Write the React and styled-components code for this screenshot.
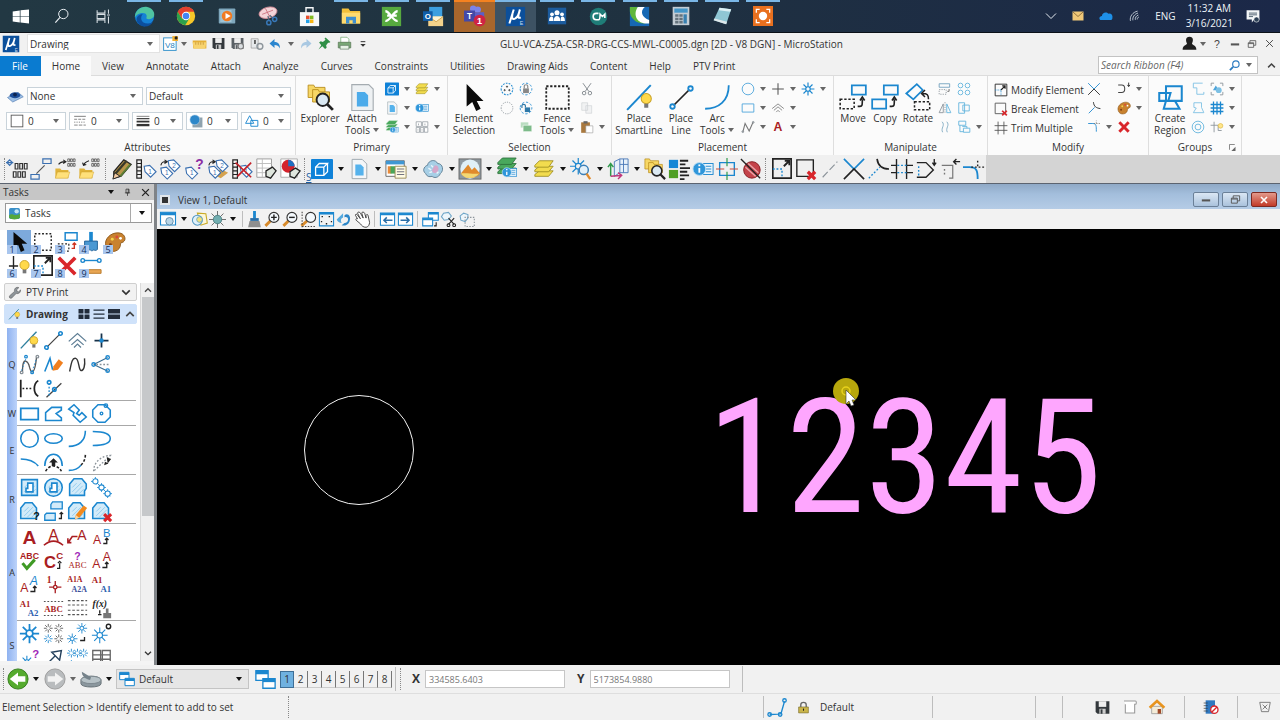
import React from "react";
import styled, { createGlobalStyle, css } from "styled-components";

const BLUE = "#1b87cf";
const INK = "#222";
const GREY = "#8a9299";
const RED = "#a91d22";

const GlobalStyle = createGlobalStyle`
  * { box-sizing: border-box; }
  body { margin: 0; background: #f0f0f0; }
  body, button, input, select {
    font-family: "Open Sans", "Noto Sans", sans-serif;
    font-size: 10px;
    line-height: 12px;
    color: #333;
  }
  button { padding: 0; border: 0; background: none; }
  h1, h2 { margin: 0; font-size: 10px; font-weight: 400; }
`;

/* ---------- icon drawings, all on a 24 x 24 grid ---------- */

const P = ({ d, c = BLUE, w = 1.5, f = "none", ...rest }) => (
  <path d={d} stroke={c} strokeWidth={w} fill={f} {...rest} />
);
const S = ({ d, f = INK, ...rest }) => <path d={d} fill={f} {...rest} />;
const C = ({ x, y, r = 2, c = BLUE, w = 1.5, f = "none" }) => (
  <circle cx={x} cy={y} r={r} stroke={c} strokeWidth={w} fill={f} />
);
const T = ({ x, y, s = 10, f = RED, children, ...rest }) => (
  <text x={x} y={y} fontSize={s} fill={f} textAnchor="middle" fontFamily="Liberation Sans, sans-serif" {...rest}>
    {children}
  </text>
);
const Serif = (props) => <T fontFamily="Liberation Serif, serif" fontWeight="700" {...props} />;

const Bulb = ({ x = 15, y = 13 }) => (
  <g transform={`translate(${x} ${y})`}>
    <circle r="5" fill="#ffd94a" stroke="#c9a227" />
    <path d="M-2 5h4v4h-4z" fill="#777" />
  </g>
);
const Cross = ({ x = 16, y = 16, r = 4, w = 3 }) => (
  <path d={`M${x - r} ${y - r}l${2 * r} ${2 * r}M${x + r} ${y - r}l${-2 * r} ${2 * r}`} stroke="#d9262b" strokeWidth={w} fill="none" />
);
/* eight rays round a small open centre */
const Spark = ({ x = 12, y = 12, r = 8, c = BLUE, w = 1.5 }) => {
  const k = r * 0.7;
  const i = r * 0.35;
  const j = i * 0.7;
  return (
    <g stroke={c} strokeWidth={w} fill="none">
      <path
        d={`M${x} ${y - r}V${y - i}M${x} ${y + i}V${y + r}M${x - r} ${y}H${x - i}M${x + i} ${y}H${x + r}M${x - k} ${y - k}L${x - j} ${y - j}M${x + j} ${y + j}L${x + k} ${y + k}M${x + k} ${y - k}L${x + j} ${y - j}M${x - j} ${y + j}L${x - k} ${y + k}`}
      />
      {r > 5 && <circle cx={x} cy={y} r={i} />}
    </g>
  );
};
const Lens = ({ x = 14, y = 9, handle = "#d88a2a" }) => (
  <g>
    <path d={`M${x - 4} ${y + 4}L2 21`} stroke={handle} strokeWidth="4" />
    <circle cx={x} cy={y} r="7" fill="#f4f9fd" stroke="#333" strokeWidth="1.6" />
  </g>
);
const Layers = ({ c = "#f2dc4e", s = "#9a8b1d", y = 0 }) => (
  <g transform={`translate(0 ${y})`} fill={c} stroke={s} strokeWidth=".9">
    <path d="M2 18l5-4h15l-5 6H2z" />
    <path d="M2 13l5-4h15l-5 6H2z" />
    <path d="M2 8l5-5h15l-5 7H2z" />
  </g>
);
const InfoCard = () => (
  <g>
    <rect x="9" y="6" width="14" height="12" fill="#eaf5fc" stroke={BLUE} />
    <path d="M15 9h6M15 12h6M15 15h6" stroke={BLUE} />
    <circle cx="8" cy="12" r="7" fill="#2f96da" stroke="#bfe0f5" />
    <path d="M8 11v5M8 7v2" stroke="#fff" strokeWidth="2" />
  </g>
);
const Folder = ({ x = 0, y = 0, k = 1 }) => (
  <g transform={`translate(${x} ${y}) scale(${k})`}>
    <path d="M2 6h7l2 2h10v12H2z" fill="#e0b33a" />
    <path d="M5 11h18l-3 9H2z" fill="#ffe07a" stroke="#c99a22" strokeWidth=".6" />
  </g>
);
const Card = ({ x, y }) => (
  <path transform={`translate(${x} ${y})`} d="M0 2V0h5l1 2h9v9H0z" fill="#f7d765" stroke="#b98d1b" strokeWidth=".8" />
);
const Sheet = () => (
  <g transform="translate(4 1)">
    <path d="M.5.5h11l5 5v16H.5z" fill="#f4f6f8" stroke="#9aa5ad" />
    <path d="M4 6h6l3 3v9H4z" fill="#55b2ec" />
  </g>
);
const Palette = () => (
  <g>
    <path d="M2 16C0 9 7 2 15 2c8 0 9 7 7 9-1 2-4 1-4 3 0 4-2 7-6 8-5 1-9-1-10-6z" fill="#c9822f" stroke="#8c5618" />
    <circle cx="9" cy="9" r="1.600" fill="#f3d34b" />
    <circle cx="14" cy="6.500" r="1.600" fill="#d94a3a" />
    <circle cx="18" cy="8" r="1.500" fill="#fff" />
    <circle cx="7" cy="15" r="1.600" fill="#7a3c12" />
  </g>
);
const Tag = ({ x = 10, y = 10, n = "1", c = "#3a6fb0" }) => (
  <g transform={`translate(${x} ${y})`}>
    <path d="M0 1l6-1 7 7-6 6-6-6z" fill="#fff" stroke={c} strokeWidth="1.200" />
    <T x="6.500" y="9" s="7" f={c}>{n}</T>
  </g>
);
const Hatch = ({ d }) => (
  <g>
    <path d={d} fill="#d3ebf9" stroke={BLUE} strokeWidth="1.800" />
    <path d="M6 12l5-5M6 17L16 7M9 19l9-9M14 19l5-5" stroke="#8cc8ec" strokeWidth="1" />
  </g>
);
const Floppy = ({ c = "#33383c" }) => (
  <g>
    <path d="M1 2h22v20H4l-3-3z" fill={c} />
    <path d="M6 2h12v9H6z" fill="#eee" />
    <path d="M7 14h10v8H7z" fill="#ccc" />
    <path d="M9 15h3v7H9z" fill={c} />
  </g>
);
const Dots = ({ d, c = INK, w = 1.5, dash = "2 2" }) => <path d={d} stroke={c} strokeWidth={w} strokeDasharray={dash} fill="none" />;
const Pencil = ({ c = "#f28a1e" }) => (
  <g>
    <path d="M10 16L19 5l4 3-9 11-5 2z" fill={c} />
    <path d="M9 21l1-5 4 3z" fill="#f7d7a8" />
  </g>
);
const Bubbles = () => (
  <path d="M15 1h2v3h-2zM18 1h2v3h-2zM21 1h2v3h-2zM15 6h2v3h-2zM18 6h2v3h-2zM21 6h2v3h-2z" fill="none" stroke="#444" strokeWidth=".8" />
);

const art = {
  windows: <S f="#fff" d="M1 5l10-1.500V11.500H1zM12 3.300L24 2v9.500H12zM1 12.500h10v8L1 19zM12 12.500h12V22l-12-1.500z" />,
  search: <g><C x={14} y={9} r={7} c="#e8eef2" /><P c="#e8eef2" w={1.800} d="M9 14l-7 8" /></g>,
  taskView: <P c="#d7dfe4" d="M3 3v4h11V3M3 21v-4h11v4M3 9h11v6H3zM19 2v6M19 12v10M17 10h4" />,
  edge: <g><circle cx="12" cy="12" r="11" fill="#1581d5" /><path d="M1 13C1 4 9 0 15 1c6 1 9 6 8 10-1 4-7 5-9 3 1-2 1-6-4-6-5 0-8 3-9 5z" fill="#4fc3a1" /><path d="M10 9c-3 3-3 11 6 11 3 0 5-2 6-3-3 7-11 8-16 4-5-4-4-11 4-12z" fill="#0c4f9e" /></g>,
  chrome: <g><circle cx="12" cy="12" r="11" fill="#f6c729" /><path d="M12 1C8 1 4 3 2 7l5 8 5-8h10c-2-4-6-6-10-6z" fill="#e2402f" /><path d="M2 7c-3 7 1 15 9 16l5-8-9 0z" fill="#2da14c" /><circle cx="12" cy="12" r="5" fill="#fff" /><circle cx="12" cy="12" r="4" fill="#4285f4" /></g>,
  media: <g><rect x="1" y="2" width="22" height="20" rx="1" fill="#7fa8bd" /><rect x="3" y="4" width="15" height="16" fill="#9fc3d4" /><circle cx="12" cy="12" r="7" fill="#f07b22" /><path d="M10 8l7 4-7 4z" fill="#fff" /></g>,
  snip: <g><ellipse cx="12" cy="8" rx="11" ry="6.500" fill="#f3d4d8" stroke="#d78f9a" transform="rotate(-15 12 8)" /><path d="M5 10L18 5M9 3l5 10" stroke="#c96b7a" /><path d="M12 12l1 5M14 11l4 4" stroke="#567" strokeWidth="1.500" /><circle cx="13" cy="20" r="2.500" fill="none" stroke="#3878b8" strokeWidth="1.800" /><circle cx="20" cy="16" r="2.500" fill="none" stroke="#3878b8" strokeWidth="1.800" /></g>,
  store: <g><path d="M1 7h22v16H1z" fill="#f6f8f9" /><path d="M8 8V2h8v6" fill="none" stroke="#f6f8f9" strokeWidth="1.600" /><path d="M8 11h4v4H8z" fill="#e8502e" /><path d="M12.500 11h4v4h-4z" fill="#80bb22" /><path d="M8 15.500h4v4H8z" fill="#22a0e8" /><path d="M12.500 15.500h4v4h-4z" fill="#f9b613" /></g>,
  explorer: <g><path d="M1 3h8l2 3h12v15H1z" fill="#f3bf3a" /><path d="M1 8h22v13H1z" fill="#ffdb70" /><path d="M6 21v-8h12v8h-4v-4h-4v4z" fill="#3f8fcf" /></g>,
  xchange: <g><rect x="1" y="1" width="22" height="22" fill="#57a93f" /><path d="M5 6c5 0 9 12 14 11M19 6c-5 0-9 12-14 11M7 11h11" stroke="#fff" strokeWidth="2.600" fill="none" /></g>,
  outlook: <g><path d="M7 1h15v14H7z" fill="#3c9fe0" /><path d="M6 12h17v11H6z" fill="#f3d28b" /><path d="M6 12l9 6 8-6" fill="#fff3d0" stroke="#c99a44" /><rect x="0" y="6" width="11" height="11" fill="#0f5ea8" /><T x="5.500" y="15" s="9" f="#fff" fontWeight="700">O</T></g>,
  teams: <g><circle cx="15" cy="5" r="3.500" fill="#7b83eb" /><path d="M9 8h13v9c0 4-8 5-11 2z" fill="#5b5fc7" /><circle cx="10" cy="4" r="3.500" fill="#7b83eb" /><rect x="0" y="6" width="12" height="12" fill="#4449a8" /><T x="6" y="15.500" s="9" f="#fff" fontWeight="700">T</T><circle cx="17" cy="17" r="6.500" fill="#cf2344" /><T x="17" y="20.500" s="10" f="#fff" fontWeight="700">1</T></g>,
  mu: <g><rect x="1" y="1" width="22" height="22" fill="#0b4f9b" /><path d="M10 4L5 20M9 7c-2 8 0 9 3 7 2-1 4-5 5-10-2 7-3 11 1 9" stroke="#fff" strokeWidth="2.300" fill="none" /><T x="19" y="22" s="6" f="#cde">E</T></g>,
  people: <g><rect x="1" y="2" width="22" height="20" fill="#1c5c9e" /><g fill="#fff"><circle cx="12" cy="8" r="3" /><circle cx="6" cy="10" r="2.300" /><circle cx="18" cy="10" r="2.300" /><path d="M8 18c0-8 8-8 8 0zM2.500 18c0-7 5-6 5-3v3zM21.500 18c0-7-5-6-5-3v3z" /></g></g>,
  connect: <g><circle cx="12" cy="12" r="11" fill="#1f7d78" /><path d="M12 8H9c-5 0-5 8 0 8h3c2 0 2-3 2-7l3 3 3-3v5" stroke="#fff" strokeWidth="2" fill="none" /></g>,
  swoosh: <g><path d="M1 1h22v22H1z" fill="#1668b4" /><path d="M1 1h9c-3 7 1 14 9 19C9 21 1 14 1 6z" fill="#5fb63c" /><path d="M10 1h8c-6 5-3 12 5 15v4C9 21 4 10 10 1z" fill="#fff" /></g>,
  calculator: <g><rect x="2" y="1" width="20" height="22" fill="#c3ccd3" /><rect x="4" y="3" width="16" height="5" fill="#4496c8" /><path d="M5 10h4v3H5zM10 10h4v3h-4zM5 14h4v3H5zM10 14h4v3h-4zM5 18h4v3H5zM10 18h4v3h-4z" fill="#65737d" /><path d="M15 10h4v11h-4z" fill="#3880b0" /></g>,
  notepad: <g><path d="M9 2l14 2-6 18-15-5z" fill="#8fc6d4" /><path d="M9 2l14 2-1 3L8 5z" fill="#dceff4" /><path d="M17 22l-15-5 1-2 15 4z" fill="#dfe8ea" /></g>,
  recorder: <g><rect x="0" y="0" width="24" height="24" fill="#e8701f" /><circle cx="12" cy="12" r="5" fill="#fff" /><P c="#fff" w={1.500} d="M4 8V4h4M16 4h4v4M20 16v4h-4M8 20H4v-4" /></g>,
  chevronWhite: <P c="#e6ecf2" w={2} d="M2 7l10 10L22 7" />,
  trayMail: <g><rect x="1" y="3" width="22" height="18" fill="#f0c878" /><P c="#75572a" d="M2 4l10 9L22 4" /></g>,
  cloud: <S f="#1e90e8" d="M4 19c-5 0-4-7 1-7 0-6 8-8 11-4 5-1 8 3 7 7 0 3-1 4-4 4z" />,
  wifi: <g transform="rotate(-12 12 12)"><P c="#dbe4ea" d="M3 20C3 11 11 4 21 4M8 20c0-6 6-12 13-12M13 20c0-4 4-8 8-8M17 20c0-2 2-4 4-4" /></g>,
  notice: <g><path d="M1 2h22v16h-9l-4 5v-5H1z" fill="#f3f6f8" /><path d="M5 7h14M5 10h14M5 13h7" stroke="#33485a" strokeWidth="1.400" /><circle cx="18" cy="18" r="4.500" fill="#2b3f55" stroke="#fff" /></g>,

  v8: <g><rect x="1" y="3" width="20" height="20" fill="#fff" stroke="#2f8fca" strokeWidth="1.500" /><T x="11" y="19" s="13" f="#1f7fc0">V8</T><path d="M15 0h9v8h-9z" fill="#f2b233" /><circle cx="21" cy="3" r="2.500" fill="#222" /></g>,
  openBox: <g><path d="M1 7h22v13H2z" fill="#e5af35" /><path d="M1 10h22l-2 10H3z" fill="#f7d36e" /><path d="M6 10v4M10 10v4M14 10v4M18 10v4" stroke="#b8842a" /></g>,
  save: <Floppy />,
  saveGear: <g><Floppy c="#5b6166" /><circle cx="18" cy="17" r="5" fill="#d9dde0" stroke="#777" strokeWidth="2" /></g>,
  saveAlt: <g><path d="M2 3h12v16H2z" fill="#e6e9eb" stroke="#888" /><path d="M7 5h3v7H7z" fill="#555" /><circle cx="17" cy="16" r="5" fill="none" stroke="#8e969c" strokeWidth="2.500" /></g>,
  undo: <S f="#2b86cf" d="M1 11l10-9v6c8 0 11 5 11 13-3-6-6-7-11-7v6z" />,
  redo: <S f="#a9c8e2" d="M23 11L13 2v6C5 8 2 13 2 21c3-6 6-7 11-7v6z" />,
  pin: <S f="#2f8f46" d="M14 1l9 8-3 2-1-1-4 5 1 5-3 2-5-5-7 6 5-8-4-5 3-2 4 1 5-4-2-2z" />,
  print: <g><path d="M6 2h10l3 3v6H6z" fill="#fff" stroke="#5f9e5d" /><path d="M2 10h20v9H2z" fill="#7aa876" stroke="#4e6b4c" /><path d="M5 15h14v6H5z" fill="#e8f2e6" stroke="#56745a" /></g>,
  overflow: <g><P c="#333" w={3} d="M5 5h14" /><S d="M4 12h16l-8 8z" f="#333" /></g>,
  user: <S f="#1f1f1f" d="M12 1c7 0 6 7 4 11 0 3 7 2 7 10H1c0-8 7-7 7-10C6 8 5 1 12 1z" />,
  help: <T x="12" y="20" s="21" f="#444">?</T>,
  minimize: <P c="#555" w={5} d="M2 13h20" />,
  restore: <g><P c="#555" w={2} d="M3 9h13v11H3zM7 9V4h14v11h-5M3 11h13" /></g>,
  close: <P c="#444" w={2.500} d="M3 3l18 18M21 3L3 21" />,
  closeLight: <P c="#fff" w={5} d="M3 3l18 18M21 3L3 21" />,
  closeBold: <P c="#222" w={3.500} d="M3 3l18 18M21 3L3 21" />,
  find: <g><C x={15} y={9} r={7} c="#2b7bc0" w={2.500} /><P c="#2b7bc0" w={4} d="M9 15l-7 7" /></g>,
  up: <P c="#444" w={4} d="M3 17l9-9 9 9" />,
  down: <P c="#333" w={4} d="M3 8l9 9 9-9" />,
  pushPin: <P c="#333" w={2} d="M8 3h8v10H8zM5 13h14M12 13v8M14 3v10" />,

  level: <g><path d="M2 14l14-7 7 6-14 7z" fill="#9ec0e6" stroke="#5d86b8" /><ellipse cx="12" cy="11" rx="7" ry="4" fill="#1d4f9a" /><circle cx="12" cy="10" r="2.500" fill="#0c2450" /></g>,
  swatch: <rect x="2" y="2" width="20" height="20" fill="#fff" stroke="#555" strokeWidth="1.500" />,
  lineStyle: <g><P c="#777" w={1.600} d="M2 4h20" /><Dots c="#777" dash="5 2" d="M2 9h20" /><Dots c="#777" dash="2 2" d="M2 14h20" /><Dots c="#777" dash="6 2" d="M2 19h20" /></g>,
  weight: <g><P c="#333" w={1} d="M1 4h22" /><P c="#333" w={2} d="M1 8h22" /><P c="#333" w={3} d="M1 13h22" /><P c="#333" w={4} d="M1 19h22" /></g>,
  transparency: <g><rect x="6" y="6" width="17" height="17" fill="#8fa2ae" /><circle cx="10" cy="10" r="8.500" fill="#2d87c9" stroke="#bcd8ec" /></g>,
  priority: <g><P w={1.600} d="M8 3l7 13H1z" /><P w={1.600} d="M10 11h12v10H10z" /></g>,

  explorerBig: <g><Card x={1} y={1} /><Card x={5} y={5} /><circle cx="14" cy="14" r="5.500" fill="#dbe9f2" stroke="#222" strokeWidth="1.700" /><path d="M18 18l5 5" stroke="#222" strokeWidth="2.500" /></g>,
  attachBig: <g><path d="M2.500.500h15l4 4v19h-19z" fill="#eef1f3" stroke="#a5acb1" /><path d="M7 7h7l3 3v10H7z" fill="#4cabea" /></g>,
  cube: <g><rect x="0" y="1" width="24" height="22" rx="1" fill="#0f82d8" /><P c="#fff" w={1.400} d="M5 10h9v9H5zM5 10l4-4h9l-4 4M18 6v9l-4 4" /></g>,
  model: <Sheet />,
  layers: <Layers />,
  layersGreen: <g><Layers c="#49a85c" s="#e3efe4" y={-2} /><g transform="translate(8 9) scale(.65)"><InfoCard /></g></g>,
  info: <InfoCard />,
  grid5: <g stroke="#8a9299" fill="#fff" strokeWidth="1.200"><path d="M2 3h9v8H2zM13 3h9v8h-9zM2 13h6v8H2zM9 13h6v8H9zM16 13h6v8h-6z" /><path d="M6 6v3M17 6v3M5 16v2M12 16v2" /></g>,
  arrowBig: <S f="#0a0a0a" d="M5 0v20l5-4 3.500 8 4-2-3.500-7h6z" />,
  selDots: <g><Dots c={BLUE} w={1.800} dash="3 2" d="M2 12a10 10 0 1 0 20 0a10 10 0 1 0-20 0" /><C x={12} y={8} r={1} c={INK} /><C x={8} y={14} r={1} c={INK} /><C x={16} y={14} r={1} c={INK} /></g>,
  selLock: <g><Dots c={BLUE} dash="4 3" d="M2 12a10 10 0 1 0 20 0a10 10 0 1 0-20 0" /><path d="M7 11h10v8H7z" fill="#888" /><P c="#888" w={2} d="M9 11V7c0-3 6-3 6 0v4" /></g>,
  selNone: <Dots c={GREY} dash="2 2" d="M2 12a10 10 0 1 0 20 0a10 10 0 1 0-20 0" />,
  selUnlock: <g><Dots c={BLUE} dash="4 3" d="M2 12a10 10 0 1 0 20 0a10 10 0 1 0-20 0" /><path d="M10 11h9v8h-9z" fill="#2d78a8" /><P c="#2d78a8" w={2} d="M5 12V8c0-3 6-3 6 0v3" /></g>,
  copySet: <g><path d="M3 4h13v9H3z" fill="#b9dcc0" /><path d="M7 9h15v11H7z" fill="#7dbb8a" stroke="#fff" /></g>,
  fence: <Dots w={1.600} dash="2 1.500" d="M2 2h20v20H2z" />,
  cut: <g><P c="#7b8288" d="M5 2l10 14M19 2L9 16" /><C x={7} y={19} r={3} c="#7b8288" /><C x={17} y={19} r={3} c="#7b8288" /></g>,
  copyPale: <g><path d="M3 3h10v13H3zM10 8h10v13H10z" fill="#f1f2f3" stroke="#c9cdd0" /></g>,
  paste: <g><path d="M2 4h15v18H2z" fill="#a9793f" /><path d="M6 2h7v4H6z" fill="#666" /><path d="M10 10h12v12H10z" fill="#fff" stroke="#999" /></g>,
  smartLine: <g><P w={1.800} d="M1 23L22 1" /><g transform="translate(18 13) scale(.9)"><Bulb x={0} y={0} /></g></g>,
  lineBig: <g><P c={INK} w={1.300} d="M5 19L19 5" /><C x={4} y={20} r={2} w={1.600} /><C x={20} y={4} r={2} w={1.600} /></g>,
  arcBig: <P w={1.600} d="M1 22C13 22 22 15 22 1" />,
  circle: <C x={12} y={12} r={10} c="#4ba3da" />,
  rect: <P c="#4ba3da" d="M2 5h20v14H2z" />,
  rectB: <P w={2} d="M2 6h20v13H2z" />,
  curve: <g><P c="#777" w={1.800} d="M3 21L7 6l7 13L21 3" /><C x={3} y={20} r={1.500} c={GREY} /><C x={21} y={4} r={1.500} c={GREY} /></g>,
  point: <P c="#555" w={1.800} d="M12 2v20M2 12h20" />,
  multi: <P c="#777" w={1.400} d="M2 13l10-8 10 8M5 16l7-6 7 6M9 19l3-3 3 3" />,
  textA: <T x="12" y="19" s="21" fontWeight="700">A</T>,
  spark: <Spark r={11} w={2} />,
  move: <g><P w={1.500} d="M11 2h12v8H11z" /><Dots w={1.300} dash="2 1.500" d="M1 14h12v8H1z" /><P c={INK} w={1.400} d="M16 20h2c2 0 2-1 2-6M18 15l2-3 2 3" /></g>,
  copyBig: <g><P w={1.500} d="M11 2h12v8H11zM1 14h12v8H1z" /><P c={INK} w={1.400} d="M16 20h2c2 0 2-1 2-6M18 15l2-3 2 3" /></g>,
  rotate: <g><P w={1.500} d="M2 9l9-8 5 5-8 8z" /><Dots w={1.300} dash="2 1.500" d="M9 16h13v7H9z" /><P c={INK} w={1.300} d="M21 14c0-4-1-5-5-5M18 6l-3 3 3 3" /></g>,
  scaleEl: <g><P c="#6f9fbd" d="M2 3h18v6H2z" /><Dots c={GREY} d="M2 13h12v8H2z" /><P c="#666" d="M19 12v4h-3" /></g>,
  array: <g><C x={6} y={6} r={4} c="#61b3dd" /><C x={18} y={6} r={4} c="#61b3dd" /><C x={6} y={18} r={4} c="#61b3dd" /><C x={18} y={18} r={4} c="#61b3dd" /></g>,
  mirror: <g><P c={GREY} d="M9 5v15H2z" /><P c="#61b3dd" d="M15 5v15h7z" /><Dots c={GREY} d="M12 2v20" /></g>,
  align: <g><P c="#61b3dd" d="M3 3h10v18H3zM10 7h11v10H10z" /></g>,
  stretch: <P c="#7ba8c0" d="M7 3c6 6-3 11 1 18M15 3c6 6-3 11 1 18" />,
  move2: <P c="#61b3dd" d="M3 2h12v7H3zM5 9v11h6M11 14h11v7H11zM9 11h8v3" />,
  modify: <g><P c={INK} d="M2 2h20v20H2z" /><P c={INK} w={2} d="M12 12l7-7M14 5h5v5" /><Dots c={BLUE} d="M2 12h10v10" /></g>,
  breakEl: <g><P c="#555" d="M2 2h18v18H2z" /><Cross x={18} y={19} /></g>,
  trim: <P c="#555" d="M7 1v22M17 1v22M1 8h22M1 16h22" />,
  cross: <g><P c={BLUE} d="M2 2l10 10L22 2" /><P c={INK} d="M2 22l10-10 10 10" /></g>,
  extend: <g><P c={BLUE} d="M13 11L3 21" /><P c={INK} d="M11 2c1 8 5 10 12 11" /></g>,
  fillet: <g><P c={BLUE} d="M2 6h8c6 0 6 4 6 14" /><Dots c="#777" d="M12 6h11M16 6V1" /></g>,
  join: <g><P c="#444" w={1.800} d="M2 5h6c7 0 7 13 0 13H2" /><P c={INK} d="M20 1v6M18 5l2 3 2-3" /></g>,
  palette: <Palette />,
  cross2: <Cross x={12} y={12} r={8} w={5} />,
  delete: <Cross x={12} y={12} r={9} w={4} />,
  region: <P w={1.800} d="M8 2h14v13H8zM2 8h10l-2 7h6l4 7H6l2-7H2z" />,
  regionS1: <P c="#7cc0e4" d="M20 2H4v8h6v11h12v-4" />,
  regionS2: <P c="#7cc0e4" d="M5 3h13v8l4 9H4l5-8-4-1z" />,
  regionS3: <g><C x={12} y={12} r={10} c="#61b3dd" /><C x={12} y={12} r={5} c="#61b3dd" /></g>,
  groupA: <g><P c={GREY} d="M2 7V2h5M17 2h5v5M22 17v5h-5M7 22H2v-5" /><path d="M5 14l5-8 5 8z" fill="#4ba3da" /><circle cx="15" cy="14" r="5" fill="#7cc0e4" /></g>,
  hash: <P w={2.200} d="M6 1v22M12 1v22M18 1v22M1 6h22M1 12h22M1 18h22" />,
  snapSet: <g><P c={GREY} d="M7 3v18M1 9h13M14 9v9h6" /><circle cx="18" cy="10" r="4" fill="#ffe58a" stroke="#d9b12c" /></g>,
  launcher: <g><P c="#666" w={2} d="M4 18V4h14" /><S f="#666" d="M20 10v11H9z" /></g>,

  tbl: <g><P c="#3a6fb0" w={1.300} d="M0 5h8M4 2l3 3-3 3-3-3z" /><g fill="none" stroke="#333" strokeWidth="1.300"><path d="M10 6h3v6h-3zM15 6h3v6h-3zM20 6h3v6h-3zM8 15h3v6H8zM13 15h3v6h-3zM18 15h3v6h-3z" /></g></g>,
  link: <g><P c="#3a6fb0" w={1.300} d="M14 1h9v5h-9zM1 18h9v5H1z" /><P c="#555" w={1.300} d="M7 17L16 8" /></g>,
  folderIn: <g><Folder x={0} y={7} k={0.75} /><P c={INK} w={1.200} d="M5 7c2-3 4-3 7-3M10 2l3 2-3 2" /><Bubbles /></g>,
  folderOut: <g><Folder x={0} y={7} k={0.75} /><P c={INK} w={1.200} d="M12 3c-3 1-5 2-6 5M5 5l1 3 3-1" /><Bubbles /></g>,
  tagEdit: <g><path d="M3 15L14 2l8 5L11 20l-8 2z" fill="#b8954a" stroke="#222" strokeWidth="1.300" /><path d="M5 17L17 3" stroke="#3a3a2a" strokeWidth="2.500" /><path d="M10 20L21 7" stroke="#5c7f35" strokeWidth="2" /><path d="M2 23l2-7 6 4z" fill="#f1c9a0" stroke="#222" /></g>,
  tagColumn: <g><P c={INK} w={1.300} d="M2 2h5v20H2zM2 6h5M2 10h5M2 14h5M2 18h5" /><Tag x={10} y={8} /></g>,
  tagCopy: <g><Tag x={2} y={10} /><Tag x={10} y={2} n="2" /><P c={INK} w={1.200} d="M2 8c1-4 3-4 6-4M6 2l3 2-3 2" /></g>,
  tagAsk: <g><Tag x={3} y={10} /><T x="18" y="12" s="15" f="#8b2fa5" fontWeight="700">?</T></g>,
  tagMap: <g><path d="M7 18l8-6 8 4-8 6z" fill="#d4a24f" /><Tag x={2} y={9} /><Tag x={10} y={2} n="2" /><P c={INK} w={1.200} d="M2 8c1-4 3-4 6-4M6 2l3 2-3 2" /></g>,
  tagDelete: <g><P c={INK} w={1.300} d="M2 2h5v20H2zM2 6h5M2 10h5M2 14h5M2 18h5" /><Tag x={10} y={8} /><path d="M5 5l17 16M22 5L7 20" stroke="#c4222a" strokeWidth="1.800" /></g>,
  report: <g><path d="M2 1h16v20H2z" fill="#fff" stroke="#999" /><path d="M2 6h16M2 11h16M2 16h16M8 1v20" stroke="#bbb" /><path d="M12 14l7-4 4 4-6 8-5-2z" fill="#dfe6de" stroke="#222" strokeWidth="1.400" /></g>,
  pie: <g><path d="M2 1h18v20H2z" fill="#fff" stroke="#aaa" /><circle cx="10" cy="9" r="7" fill="#d3222b" /><path d="M10 9V2a7 7 0 0 1 7 7z" fill="#1f6fc2" /><path d="M12 15l6-4 5 3-6 8-5-2z" fill="#dfe6de" stroke="#222" strokeWidth="1.400" /></g>,
  refDlg: <g><path d="M1 3h20v17H1z" fill="#fff" stroke="#666" /><path d="M1 3h20v4H1z" fill="#3f97d3" /><path d="M3 9h4v8H3z" fill="#e88a3a" /><path d="M6 9h5v8H6z" fill="#48a75a" /><path d="M11 9h12v13H11z" fill="#fffbe3" stroke="#998b55" /><path d="M13 12h8M13 15h8M13 18h8" stroke="#667" /></g>,
  cloudPt: <g><path d="M4 17C-1 13 4 8 6 8c1-6 9-7 11-2 6 0 7 8 3 11-2 5-7 5-9 3-3 1-6 0-7-3z" fill="#a7cfe6" stroke="#5c7d93" /><path d="M14 8c4 0 5 4 3 7-3 3-6 1-6-2z" fill="#d5a6c9" /><path d="M7 11l3 2M10 8l2 2M8 16l3-1M16 17l2-2" stroke="#e8f4fb" strokeWidth="1.500" /></g>,
  raster: <g><rect x="0" y="1" width="24" height="22" fill="#8f9aa1" stroke="#666" /><circle cx="12" cy="12" r="10.500" fill="#dff0f8" /><path d="M2 17L10 7l4 6 3-3 6 7c-5 6-16 7-21 0z" fill="#e08a2c" /><path d="M2 17c6-1 14 1 20 0-5 6-15 7-20 0z" fill="#f3d873" /></g>,
  layersBlue: <g><Layers c="#49a85c" s="#2a6d3a" y={-3} /><g transform="translate(6 7) scale(.72)"><InfoCard /></g></g>,
  locate: <g><Spark x={9} y={9} r={9} w={1.300} /><circle cx="15" cy="13" r="5" fill="#e2f0f9" stroke="#3a7fb8" strokeWidth="1.600" /><path d="M18 17l4 6" stroke="#e08a2c" strokeWidth="2.500" /></g>,
  acs: <g><path d="M8 4l6-3v15l-6 4zM14 1h9v15h-9" fill="#e6f0fa" stroke="#4a78b8" /><path d="M14 7h9M18 1v15" stroke="#4a78b8" /><P c="#2f9a4c" w={1.600} d="M4 20V7M1 10l3-4 3 4" /><P c="#c0377c" w={1.600} d="M4 20l11-1M12 16l4 3-4 4" /></g>,
  details: <g><path d="M1 2h10v9H1z" fill="#1386d6" /><path d="M1 13h10v9H1z" fill="#4f9f25" /><P c={INK} w={2} d="M13 3h9M13 7h6M13 11h11M13 15h8M13 19h10M13 23h5" /></g>,
  snapBox: <g><P w={1.500} d="M4 5h16v14H4z" /><P c="#2f9a4c" w={1.300} d="M12 0v9M12 15v9" /><P c="#c94a3a" w={1.300} d="M0 12h9M15 12h9" /></g>,
  noSnap: <g><circle cx="13" cy="13" r="9" fill="#c4434a" stroke="#84191f" /><path d="M9 6l11 10M6 10l11 10" stroke="#e9a6aa" strokeWidth="1.500" /><P c={INK} w={1.500} d="M1 1l21 21" /></g>,
  modifyBox: <g><P c={INK} w={1.800} d="M2 1h20v21H2z" /><P c={INK} w={2} d="M14 9l6-6M15 3h5v5" /><Dots c={BLUE} d="M2 12h10v10" /></g>,
  deleteBox: <g><P c={INK} w={1.500} d="M2 2h18v18H2z" /><Cross x={18} y={19} w={3.500} /></g>,
  thinLine: <g><Dots c={GREY} dash="8 3" w={1.200} d="M4 21L20 4" /></g>,
  crossing: <g><P w={1.800} d="M1 1l11 11L23 1" /><P c={INK} w={1.800} d="M1 23l11-11 11 11" /></g>,
  extendTo: <g><Dots c={BLUE} d="M2 22L14 10" /><P c={INK} w={1.800} d="M11 1c1 8 5 11 13 11" /></g>,
  trimTo: <g><P c={INK} w={1.500} d="M6 1v22M17 1v22M0 8h7M16 8h8M0 16h7M16 16h8" /><Dots c={BLUE} d="M7 8h10M7 16h10" /></g>,
  arrowTag: <g><P c={INK} w={1.500} d="M2 5h10l8 8-8 8H2M21 1v6M19 5l2 3 2-3" /><Dots c={BLUE} d="M4 9v10" /></g>,
  returnTo: <g><P c="#777" w={1.300} d="M3 8h12v14h-4" /><Dots c="#777" d="M6 12v8" /><P c={INK} w={1.500} d="M23 4h-6M19 1l-3 3 3 3" /></g>,
  filletDots: <g><P w={2} d="M0 10h7c8 0 9 4 9 13" /><Dots c={INK} d="M9 10h15M16 9V1" /></g>,

  viewAttr: <g><P w={1.500} d="M2 3h20v17H2z" f="#fff" /><path d="M2 3h20v4H2z" fill={BLUE} /><circle cx="14" cy="15" r="5" fill="#b9d5e6" stroke="#487898" /></g>,
  display: <g><P c="#c9aa26" w={1.500} d="M9 3l12 1 2 13-9 3z" f="#fdf7d8" /><circle cx="9" cy="13" r="7" fill="#e0f0f9" stroke="#5298c4" strokeWidth="1.500" /><circle cx="12" cy="12" r="4" fill="#f2e27a" stroke="#5298c4" /></g>,
  sun: <g><Spark r={12} c="#666" w={1.300} /><circle cx="12" cy="12" r="6" fill="#71aeb0" stroke="#3f6f72" /></g>,
  brush: <g><path d="M10 0h4v11h-4z" fill={BLUE} /><path d="M6 10h12v4H6z" fill="#2a6fa8" /><path d="M5 14h14l2 9H3z" fill="#8f8f8f" /></g>,
  brushBlue: <g><path d="M10 1h4v10h-4z" fill={BLUE} /><path d="M5 11h14v9c-2 3-4-1-6 2-2-3-5 0-8-2z" fill="#4a98d2" stroke="#1f5f96" /></g>,
  zoomIn: <g><Lens /><P c={INK} w={2} d="M14 5v8M10 9h8" /></g>,
  zoomOut: <g><Lens /><P c={INK} w={2} d="M10 9h8" /></g>,
  zoomWin: <g><Lens x={15} /><Dots c="#444" d="M3 1v22M3 22h20" /></g>,
  fit: <g><P w={1.500} d="M2 2h20v19H2z" /><path d="M2 2h20v3H2z" fill={BLUE} /><Dots c={INK} w={1.800} dash="2 8" d="M5 8h14v10H5z" /></g>,
  rotView: <g><path d="M12 6c5-4 10 2 7 9-3 6-8 6-11 5l4-3c3 0 5-2 5-5s-3-4-5-3z" fill="#2b86c8" /><path d="M1 12l9-9v6c-3 1-4 4-2 8-3 0-6-2-7-5z" fill="#55a9de" /></g>,
  hand: <path d="M5 11L2 6c0-2 2-2 3 0l4 5L5 3c0-2 3-2 4 0l4 7-2-7c0-2 3-2 4 0l2 7 0-4c1-2 3-1 3 1l2 9c0 3-2 7-5 7-4 0-6-2-8-5l-6-5c-1-2 1-3 2-2z" fill="#fff" stroke="#333" strokeWidth="1.200" />,
  viewPrev: <g><P w={1.500} d="M2 3h20v17H2z" f="#fff" /><path d="M2 3h20v3H2z" fill={BLUE} /><P c="#2a6fa8" w={2.200} d="M19 13H7M11 9l-4 4 4 4" /></g>,
  viewNext: <g><P w={1.500} d="M2 3h20v17H2z" f="#fff" /><path d="M2 3h20v3H2z" fill={BLUE} /><P c="#2a6fa8" w={2.200} d="M5 13h12M13 9l4 4-4 4" /></g>,
  windows2: <g><P w={1.500} d="M9 2h14v11H9z" f="#fff" /><path d="M9 2h14v3H9z" fill={BLUE} /><P w={1.500} d="M1 10h14v11H1z" f="#fff" /><path d="M1 10h14v3H1z" fill={BLUE} /><P c={INK} d="M20 16v5h-3" /></g>,
  viewGroup: <g><P w={1.500} d="M1 2h14v11H1z" f="#fff" /><path d="M1 2h14v4H1z" fill={BLUE} /><P w={1.500} d="M9 11h14v11H9z" f="#fff" /><path d="M9 11h14v4H9z" fill={BLUE} /></g>,
  clip: <g><P c="#6fa6c8" d="M12 12l-6 1-4-5 3-5 7-1 4 5z" f="#eef6fb" /><P c={INK} d="M12 10l8 9M20 10l-8 9" /><C x={12} y={20} r={2} c={INK} /><C x={20} y={20} r={2} c={INK} /></g>,
  clipMask: <g><P c="#6fa6c8" d="M14 10l-4 5-6-2-1-6 5-4 6 2z" f="#eef6fb" /><Dots c={GREY} d="M10 22V9h13v13z" /></g>,

  tasksLogo: <g><rect x="2" y="2" width="20" height="20" rx="3" fill="#3a8fc8" /><path d="M2 15c6-5 12 4 20-3v8c-5 4-15 4-20 0z" fill="#54a83c" /><circle cx="16" cy="8" r="4" fill="#bfe4f5" /></g>,
  arrow: <S f="#0a0a0a" d="M6 1v18l5-4 3 8 4-2-3-7h6z" />,
  fenceS: <Dots w={1.600} dash="2 2" d="M3 3h18v18H3z" />,
  moveS: <g><P w={1.600} d="M10 2h13v8H10z" /><Dots w={1.300} dash="2 2" d="M2 14h12v8H2z" /><P c="#d0321e" d="M17 19h3v-5M18 15l2-2 2 2" /></g>,
  bulbLine: <g><P c={INK} d="M6 1v18M1 12h10" /><g transform="translate(18 11)"><Bulb x={0} y={0} /></g></g>,
  measure: <g><P w={1.500} d="M5 6h14" /><C x={3} y={6} r={2} /><C x={21} y={6} r={2} /><path d="M8 16h15v4H8z" fill="#e9a653" stroke="#b87828" /></g>,
  wrench: <path d="M3 18l9-8c-1-5 3-9 8-7l-4 4 1 3 3 1 3-4c1 5-3 8-8 7l-8 8c-3 2-6-1-4-4z" fill="#8d9499" stroke="#555" />,
  tiles: <S f="#222c3a" d="M1 2h10v9H1zM13 2h10v9H13zM1 13h10v9H1zM13 13h10v9H13z" />,
  lines: <P c="#222c3a" w={2.500} d="M1 4h22M1 12h22M1 20h22" />,
  bars: <S f="#222c3a" d="M0 2h24v9H0zM0 13h24v9H0z" />,

  qLine: <g><P c="#444" w={1.400} d="M5 19L19 5" /><C x={4} y={20} r={2} w={1.800} /><C x={20} y={4} r={2} w={1.800} /></g>,
  qSmart: <g><P c="#2e7f9e" w={1.600} d="M2 21L20 2" /><g transform="translate(17 12) scale(.9)"><Bulb x={0} y={0} /></g></g>,
  qMulti: <P c="#5d7d94" w={1.400} d="M2 13l10-9 10 9M5 17l7-6 7 6M8 20l4-4 4 4" />,
  qPoint: <g><P c="#17324a" w={2} d="M12 4v16M4 12h16" /><circle cx="12" cy="12" r="2.500" fill={BLUE} /></g>,
  qStream: <g><P c="#555" d="M4 20c0-20 7-10 8-5 2 8 6 9 8-11" /><C x={3} y={21} r={1.500} c={GREY} /><C x={21} y={3} r={1.500} c={GREY} /><C x={8} y={3} r={1.500} /><C x={15} y={21} r={1.500} /><Dots c={BLUE} d="M3 19L8 5M15 20l5-15" w={1} /></g>,
  qSketch: <g><P w={1.800} d="M2 20L8 5l3 13" /><path d="M12 14l6-8 5 4-6 8-6 1z" fill="#f07f1e" /></g>,
  qCurve: <P c="#333" w={1.600} d="M3 20C5 10 6 4 10 5c4 1 3 13 6 14 3 0 5-5 4-14" />,
  qAngle: <g><P c="#3a6a8c" w={1.300} d="M3 12L19 4M3 12l17 8" /><Dots c={GREY} d="M6 12h16" /><C x={19} y={4} r={2} /><C x={19} y={19} r={2} /><C x={3} y={12} r={2} /></g>,
  qMin: <g><P c={INK} w={2} d="M2 2v20" /><Dots c={INK} d="M4 12h12" /><P c={INK} w={2} d="M22 3c-6 4-6 14 0 18" /></g>,
  qNear: <g><P c="#444" w={1.500} d="M4 22L21 6" /><Dots c={BLUE} d="M7 6v15" /><C x={7} y={5} r={2} w={1.800} /><C x={13} y={13} r={2} w={1.800} /></g>,
  wShape: <P w={1.800} d="M3 20V11l7-6h11v3l-6 4 6 5v3z" />,
  wOrtho: <P w={1.800} d="M2 7l6-5 6 6-3 4 3 2 3-3 5 5-7 6-8-8 1-3z" />,
  wPoly: <g><P w={1.800} d="M8 2h8l6 6v8l-6 6H8l-6-6V8z" /><C x={12} y={12} r={1.500} /><C x={17} y={3} r={2} /></g>,
  eCircle: <C x={12} y={12} r={10} w={1.800} />,
  eEllipse: <ellipse cx="12" cy="12" rx="10" ry="5.500" fill="none" stroke={BLUE} strokeWidth="1.800" />,
  eArc: <P w={1.800} d="M2 21C14 21 21 14 21 3" />,
  eHalf: <P w={1.800} d="M2 4c13 0 20 3 20 8s-7 8-20 8" />,
  eQuarter: <P w={1.800} d="M2 8c8 0 15 2 20 8" />,
  eModify: <g><P w={1.800} d="M2 16C2-2 22-2 22 16" /><Dots w={1.800} dash="3 2" d="M3 22c4-8 14-8 18 0" /><S d="M12 7l5 5h-3v4h-4v-4H7z" /></g>,
  eArcAngle: <g><P w={1.800} d="M2 21c7 0 11-2 14-6" /><Dots w={1.800} dash="3 2" d="M16 15c3-3 5-7 5-12" /></g>,
  eAxis: <g><Dots c={GREY} d="M3 22C3 10 14 4 22 4L3 22" /><S d="M18 6l5 2-4 5zM20 13l-4-2-1 4z" /></g>,
  rHatch: <g><Hatch d="M3 3h18v18H3z" /><P w={1.800} f="#fff" d="M10 7h6v10H8v-4h2z" /></g>,
  rCross: <g><Hatch d="M2 12a10 10 0 1 0 20 0a10 10 0 1 0-20 0" /><P w={1.800} f="#fff" d="M10 7h6v10H8v-4h2z" /></g>,
  rPattern: <Hatch d="M3 21V8l5-6h9l5 6v5l-2 3v5z" />,
  rLinear: <g><P w={1} d="M2 2l20 20" /><C x={5} y={5} r={3} w={1.200} f="#fff" /><C x={12} y={12} r={3} w={1.200} f="#fff" /><C x={19} y={19} r={3} w={1.200} f="#fff" /><P w={1} d="M5 0v2M0 5h2M12 7v2M7 12h2M15 12h2M12 15v2M19 14v2M14 19h2M22 19h2M19 22v2" /></g>,
  rShow: <g><Hatch d="M2 20V8l5-6h8l5 6v12z" /><T x="20" y="22" s="12" f="#111" fontWeight="700">?</T></g>,
  rMatch: <g><path d="M9 9V4l2-3h11v8zM2 22v-6l2-2h10v8z" fill="#d3ebf9" stroke={BLUE} strokeWidth="1.500" /><P c={INK} d="M18 20h3v-6M19 15l2-2 2 2" /></g>,
  rChange: <g><Hatch d="M2 20V8l5-6h8l5 6v12z" /><Pencil /></g>,
  rDelete: <g><Hatch d="M2 20V8l5-6h8l5 6v12z" /><Cross x={19} y={19} w={3.500} /></g>,
  aText: <T x="12" y="20" s="22" fontWeight="700">A</T>,
  aSpan: <g><T x="12" y="17" s="18">A</T><P c={RED} w={1.800} d="M1 22c7-6 15-6 22 0" /></g>,
  aNote: <g><T x="17" y="16" s="16">A</T><P c={RED} w={1.800} d="M2 18l4-6h6M1 14v5h4" /></g>,
  aAlong: <g><T x="7" y="21" s="14">A</T><T x="18" y="12" s="13" f={BLUE}>B</T><P c={INK} d="M14 20h4v-5M16 16l2-2 2 2" /></g>,
  aSpell: <g><T x="12" y="10" s="10" fontWeight="700">ABC</T><P c="#3f9a25" w={3.500} d="M4 15l5 6 9-10" /></g>,
  aCase: <g><T x="8" y="20" s="19" fontWeight="700">C</T><T x="19" y="10" s="11" fontWeight="700">C</T><P c={INK} d="M16 21h3v-6M17 15l2-2 2 2" /></g>,
  aQuery: <g><T x="12" y="11" s="12" f="#a028b8" fontWeight="700">?</T><Serif x="12" y="21" s="10" fontWeight="400">ABC</Serif></g>,
  aUp: <g><T x="6" y="21" s="14">A</T><T x="18" y="13" s="14">A</T><P c={INK} d="M13 20h5v-5M16 16l2-2 2 2" /></g>,
  aItalic: <g><T x="6" y="21" s="14">A</T><T x="17" y="13" s="14" f={BLUE} fontStyle="italic">A</T><P c={INK} d="M13 20h5v-5M16 16l2-2 2 2" /></g>,
  aPlace: <g><Serif x="7" y="10" s="11">1</Serif><P c={RED} d="M14 8v14M7 15h14" /><C x={14} y={15} r={2} c={RED} f="#fff" /></g>,
  aInc: <g><Serif x="9" y="9" s="9">A1A</Serif><Serif x="14" y="20" s="9" f="#3b4f9b">A2A</Serif></g>,
  aInc1: <g><Serif x="7" y="10" s="10">A1</Serif><Serif x="17" y="20" s="10" f="#2e62b0">A1</Serif></g>,
  aInc2: <g><Serif x="7" y="10" s="10">A1</Serif><Serif x="16" y="20" s="10" f="#2e62b0">A2</Serif></g>,
  aField: <g><Serif x="12" y="16" s="10">ABC</Serif><Dots c="#555" w={1.200} d="M1 4h22M1 20h22" /></g>,
  aRows: <Dots c="#555" w={1.300} dash="3 2" d="M1 3h22M1 8h22M1 14h22M1 19h22" />,
  aFx: <g><Serif x="10" y="10" s="11" f="#222" fontStyle="italic">f(x)</Serif><P c={INK} d="M8 19h4M10 14v4" /><path d="M14 17h9v6h-9zM17 12h3v5h-3z" fill="#777" /></g>,
  sMany: <g><Spark x={6} y={6} r={5} c="#555" w={1} /><Spark x={18} y={6} r={5} c="#555" w={1} /><Spark x={6} y={18} r={5} w={1} /><Spark x={18} y={18} r={5} c="#555" w={1} /></g>,
  sCopy: <g><Spark x={17} y={6} r={6} w={1} /><Spark x={6} y={18} r={6} w={1} /><P c={INK} d="M15 20h5v-4" /></g>,
  sRing: <g><Spark x={10} y={14} r={9} w={1.200} /><C x={20} y={4} r={2.500} c={INK} w={1.600} /></g>,
  sAsk: <g><Spark x={9} y={17} r={7} w={1.200} /><T x="19" y="12" s="13" f="#a028b8" fontWeight="700">?</T></g>,
  sArrow: <P c="#24405c" w={1.600} d="M3 21L14 10M10 6l11-2-2 11z" />,
  sRow: <g><Spark x={5} y={7} r={5} w={1} /><Spark x={12} y={7} r={5} w={1} /><Spark x={19} y={7} r={5} w={1} /><Spark x={5} y={19} r={4} w={1} /></g>,
  sTable: <P c="#666" d="M2 4h9v16H2zM13 4h9v16h-9zM2 9h20M2 14h20" />,

  back: <g><circle cx="12" cy="12" r="11" fill="#55ab2e" stroke="#2f7a17" /><path d="M3 12L12 5v4h8v6h-8v4z" fill="#fff" /></g>,
  forward: <g><circle cx="12" cy="12" r="11" fill="#b9bcbe" stroke="#999" /><path d="M21 12L12 5v4H4v6h8v4z" fill="#f2f2f2" /></g>,
  drive: <g><path d="M1 14c0-4 6-5 12-5s10 2 10 5v3c0 5-22 5-22 0z" fill="#8b979e" stroke="#646e74" /><ellipse cx="12" cy="13" rx="11" ry="4" fill="#b6c1c6" stroke="#7b868c" /><path d="M2 4c0 4 3 8 9 9l1-3z" fill="#75828a" /></g>,
  snapLine: <g><P w={1.600} d="M3 20c8 0 12 0 13-1L20 5" /><C x={3} y={20} r={2} /><C x={15} y={20} r={2} /><C x={20} y={4} r={2} /></g>,
  lock: <g><path d="M3 11h18v11H3z" fill="#c9b44a" stroke="#6b5c17" /><P c="#666" w={2.500} d="M7 11V7c0-6 10-6 10 0v4" /><path d="M12 14v4" stroke="#222" strokeWidth="2" /></g>,
  sheet: <P c="#999" w={1.600} f="#fff" d="M3 3h17c2 0 2 5 0 5h-1v13H5V8" />,
  home: <g><path d="M4 11h16v11H4z" fill="#f4ecd8" stroke="#888" /><P c="#e8941f" w={4} d="M1 13L12 3l11 10" /><path d="M13 15h5v7h-5z" fill="#a04a2a" /></g>,
  dbStop: <g><path d="M4 2h14v20H4z" fill="#2f78c0" /><path d="M1 6h6M1 10h6M1 14h6M1 18h6" stroke="#333" /><circle cx="17" cy="16" r="5.500" fill="#fff" stroke="#d9262b" strokeWidth="2" /><path d="M13 20l8-8" stroke="#d9262b" strokeWidth="2" /></g>,
  trash: <P c="#777" w={1.600} d="M3 4h18l-3 16H6zM8 8l8 8M16 8l-8 8" />,
};

const Svg = styled.svg`
  display: block;
  flex: none;
  overflow: visible;
  width: ${(p) => p.$s}px;
  height: ${(p) => p.$s}px;
`;
const Icon = ({ n, s = 16 }) => (
  <Svg $s={s} viewBox="0 0 24 24" aria-hidden="true">{art[n]}</Svg>
);

/* ---------- shared controls ---------- */

const Caret = styled.span`
  flex: none;
  width: 0;
  height: 0;
  border: 3px solid transparent;
  border-top: 4px solid ${(p) => p.$c || "#666"};
  border-bottom: 0;
`;
const Tool = styled.button`
  position: relative;
  display: flex;
  flex: none;
  align-items: center;
  justify-content: center;
  width: ${(p) => p.$w || 18}px;
  height: ${(p) => p.$h || 18}px;
  background: ${(p) => p.$bg || "transparent"};
  &:hover { background: #cfe3f6; }
`;
const IconTool = ({ n, s, label, children, ...rest }) => (
  <Tool type="button" aria-label={label || n} {...rest}>
    <Icon n={n} s={s} />
    {children}
  </Tool>
);
const CaretTool = ({ label = "More options", w = 12, h = 18, c }) => (
  <Tool type="button" aria-label={label} $w={w} $h={h}><Caret $c={c} /></Tool>
);
const SelectBox = styled.span`
  position: relative;
  display: flex;
  align-items: center;
  gap: 4px;
  flex: ${(p) => (p.$w ? "none" : 1)};
  width: ${(p) => (p.$w ? p.$w + "px" : "auto")};
  height: ${(p) => p.$h || 18}px;
  padding-left: ${(p) => p.$pad || 2}px;
  background: ${(p) => p.$bg || "#fff"};
  border: 1px solid ${(p) => p.$line || "#c9d3da"};
  &::after {
    content: "";
    position: absolute;
    right: 6px;
    top: calc(50% - 2px);
    border: 3px solid transparent;
    border-top: 4px solid ${(p) => p.$c || "#666"};
    border-bottom: 0;
    pointer-events: none;
  }
`;
const Select = styled.select`
  flex: 1;
  min-width: 0;
  height: 100%;
  padding: 0;
  border: 0;
  background: transparent;
  appearance: none;
`;
const Picker = ({ icon, iconSize = 14, label, value, children, ...box }) => (
  <SelectBox {...box}>
    {icon && <Icon n={icon} s={iconSize} />}
    <Select aria-label={label} defaultValue={value}><option>{value}</option></Select>
    {children}
  </SelectBox>
);
const Handle = styled.span`
  flex: none;
  width: ${(p) => p.$w || 5}px;
  height: ${(p) => p.$h || 22}px;
  border-right: 1px dotted #888;
  margin-right: ${(p) => p.$mr || 0}px;
`;
const Rule = styled.span`
  flex: none;
  width: 1px;
  height: ${(p) => p.$h || 20}px;
  margin: 0 ${(p) => p.$m || 0}px;
  background: #bdbdbd;
`;

/* ---------- desktop task bar ---------- */

const Desktop = styled.div`
  display: flex;
  flex-direction: column;
  height: 100vh;
  min-width: 1240px;
  overflow: hidden;
`;
const TaskBar = styled.nav`
  display: flex;
  flex: none;
  height: 33px;
  border-bottom: 1px solid #0b1118;
  background: linear-gradient(90deg, #223843, #1f3140 50%, #1b2848 100%);
`;
const Apps = styled.div`
  display: grid;
  grid-template-columns: repeat(19, 1fr);
  width: 784px;
  flex: none;
`;
const AppButton = styled.button`
  display: flex;
  align-items: center;
  justify-content: center;
  height: 32px;
  background: ${(p) => p.$bg || "transparent"};
  background-image: ${(p) => (p.$line ? `linear-gradient(${p.$line}, ${p.$line})` : "none")};
  background-size: ${(p) => (p.$bg ? "100%" : "34px")} 2px;
  background-position: top center;
  background-repeat: no-repeat;
`;
const Tray = styled.div`
  display: flex;
  align-items: center;
  gap: 15px;
  margin-left: auto;
  padding-right: 20px;
  color: #eef3f7;
`;
const Clock = styled.time`
  margin: 0 -2px 0 -5px;
  font-size: 10px;
  line-height: 15px;
  text-align: center;
`;
const apps = [
  ["windows", 17], ["search", 16], ["taskView", 17], ["edge", 21, 1], ["chrome", 20, 1], ["media", 18], ["snip", 20], ["store", 21],
  ["explorer", 20, 1], ["xchange", 21, 1], ["outlook", 21, 1], ["teams", 22, "#f58220", "#a8662c"], ["mu", 21, "#7ab6e6", "#3d5263"],
  ["people", 20, 1], ["connect", 19, 1], ["swoosh", 21, 1], ["calculator", 20, 1], ["notepad", 20, 1], ["recorder", 20, 1],
];

/* ---------- title and tabs ---------- */

const TitleBar = styled.header`
  display: flex;
  align-items: center;
  flex: none;
  height: 23px;
  padding: 0 2px 2px 2px;
  background: #f1f1f1;
`;
const Quick = styled.div`
  display: flex;
  align-items: center;
  flex: none;
  margin-left: 2px;
`;
const Title = styled.h1`
  flex: 1;
  padding-left: 128px;
  padding-top: 1px;
  white-space: nowrap;
`;
const TabRow = styled.nav`
  display: flex;
  flex: none;
  height: 20px;
  background: #f1f1f1;
  border-bottom: 1px solid #dcdcdc;
`;
const Tab = styled.button`
  height: 20px;
  padding: 0 11px;
  ${(p) => p.$file && css`background: #0a7bd0; color: #fff; padding: 0 13px 0 12px;`}
  ${(p) => p.$on && css`background: #fbfbfb;`}
`;
const SearchBox = styled.label`
  display: flex;
  align-items: center;
  gap: 6px;
  width: 160px;
  height: 18px;
  margin-left: auto;
  margin-right: 4px;
  padding: 0 5px 0 2px;
  background: #fff;
  border: 1px solid #c3c3c3;
`;
const SearchInput = styled.input`
  flex: 1;
  min-width: 0;
  padding: 0;
  border: 0;
  outline: 0;
  font-style: italic;
  &::placeholder { color: #666; opacity: 1; }
`;

/* ---------- ribbon ---------- */

const Ribbon = styled.section`
  display: flex;
  flex: none;
  height: 79px;
  background: #fbfbfb;
`;
const GroupBox = styled.section`
  display: flex;
  flex-direction: column;
  flex: none;
  width: ${(p) => p.$w}px;
  padding-top: 4px;
  border-right: 1px solid #dedede;
`;
const GroupBody = styled.div`
  display: flex;
  height: 60px;
  padding-left: ${(p) => p.$pl}px;
`;
const GroupLabel = styled.h2`
  position: relative;
  display: flex;
  justify-content: center;
  line-height: 14px;
`;
const Launcher = styled.button`
  position: absolute;
  right: 4px;
  top: 3px;
`;
const Group = ({ name, w, pl = 2, children, launcher }) => (
  <GroupBox $w={w}>
    <GroupBody $pl={pl}>{children}</GroupBody>
    <GroupLabel>
      {name}
      {launcher && <Launcher type="button" aria-label="Groups settings"><Icon n="launcher" s={9} /></Launcher>}
    </GroupLabel>
  </GroupBox>
);
const BigBtn = styled.button`
  display: flex;
  flex-direction: column;
  align-items: center;
  flex: none;
  width: ${(p) => p.$w}px;
  height: 60px;
  padding-top: 2px;
  white-space: nowrap;
  &:hover { background: #e3eff9; }
`;
const IconSlot = styled.span`
  display: flex;
  align-items: center;
  height: 30px;
`;
const BigLabel = styled.span`
  display: flex;
  align-items: center;
  gap: 3px;
`;
const Big = ({ n, w, a, b, caret, s = 27 }) => (
  <BigBtn type="button" $w={w}>
    <IconSlot><Icon n={n} s={s} /></IconSlot>
    <BigLabel>{a}</BigLabel>
    {b && <BigLabel>{b}{caret && <Caret />}</BigLabel>}
  </BigBtn>
);
const Stack = styled.div`
  display: flex;
  flex-direction: column;
  flex: none;
  width: ${(p) => p.$w}px;
  margin-left: ${(p) => p.$ml || 0}px;
`;
const StackRow = styled.div`
  display: flex;
  height: 19px;
`;
const Column = ({ items, w, ml }) => (
  <Stack $w={w} $ml={ml}>
    {items.map((it, i) => (
      <StackRow key={i}>
        {it && <IconTool n={it.replace("+", "")} s={14} $w={18} />}
        {it && it.endsWith("+") && <CaretTool w={12} />}
      </StackRow>
    ))}
  </Stack>
);
const Fields = styled.div`
  display: flex;
  flex-direction: column;
  flex: 1;
  gap: 7px;
  padding: 7px 4px 0 0;
`;
const FieldRow = styled.div`
  display: flex;
  align-items: center;
  gap: 3px;
`;
const TextBtn = styled.button`
  display: flex;
  align-items: center;
  gap: 3px;
  height: 19px;
  white-space: nowrap;
`;

/* ---------- icon tool bar ---------- */

const BarRow = styled.div`
  display: flex;
  flex: none;
  height: 28px;
  background: #d4d4d4;
`;
const Bar = styled.div`
  display: flex;
  align-items: center;
  background: #f0f0f0;
`;
const KeyTip = styled.span`
  align-self: flex-end;
  width: 5px;
  margin-right: -1px;
  color: #1d5fa5;
  text-decoration: underline;
`;
const Gap = styled.span`
  flex: none;
  width: ${(p) => p.$w}px;
`;
const barA = ["tbl", "link", "folderIn", "folderOut"];
const barB = ["tagEdit", "tagColumn", "tagCopy", "tagAsk", "tagMap", "tagDelete", "report", "pie"];
const barC = ["cube", "model", "refDlg", "cloudPt", "raster", "layersBlue", "layers", "locate", "acs"];
const barD = ["explorerBig", "details", "info", "snapBox", "noSnap"];
const barE = ["modifyBox", "deleteBox", "thinLine", "crossing", "extendTo", "trimTo", "arrowTag", "returnTo", "filletDots"];

/* ---------- work area ---------- */

const Work = styled.main`
  display: flex;
  flex: 1;
  min-height: 0;
  border-top: 1px solid #5c6470;
`;
const Side = styled.aside`
  display: flex;
  flex-direction: column;
  flex: none;
  width: 157px;
  border-right: 3px solid #7f8387;
  background: #f4f4f4;
`;
const SideHead = styled.header`
  display: flex;
  align-items: center;
  gap: 9px;
  height: 16px;
  padding: 0 4px 0 3px;
  background: #c6c6c6;
`;
const Grow = styled.span`
  flex: 1;
`;
const TaskPick = styled.div`
  display: flex;
  padding: 3px 2px 7px 5px;
`;
const Splitter = styled.span`
  width: 21px;
  height: 100%;
  border-left: 1px solid #aaa;
`;
const Tools = styled.div`
  display: grid;
  grid-template-columns: repeat(5, 24px);
  padding: 0 0 5px 7px;
  background: #fff;
`;
const Num = styled.span`
  position: absolute;
  left: 0;
  bottom: 0;
  width: 10px;
  height: 9px;
  background: #a9c6ee;
  color: #12305c;
  font-size: 9px;
  line-height: 9px;
`;
const Scroller = styled.div`
  display: flex;
  flex: 1;
  min-height: 0;
  padding-bottom: 4px;
`;
const Lists = styled.div`
  flex: 1;
  min-width: 0;
  overflow: hidden;
  padding-left: 4px;
  background: #fff;
`;
const Fold = styled.button`
  display: flex;
  align-items: center;
  gap: 5px;
  width: 133px;
  height: ${(p) => (p.$on ? 20 : 18)}px;
  margin-bottom: ${(p) => (p.$on ? 4 : 3)}px;
  padding: 0 5px 0 3px;
  border: 1px solid ${(p) => (p.$on ? "#cfe2fa" : "#cfcfcf")};
  border-radius: 2px;
  background: ${(p) => (p.$on ? "#cfe2fa" : "#f2f2f2")};
  font-weight: ${(p) => (p.$on ? 700 : 400)};
`;
const Modes = styled.span`
  display: flex;
  align-items: center;
  gap: 3px;
`;
const Section = styled.div`
  display: flex;
  width: 129px;
  margin-left: 3px;
  background: #fff;
`;
const Letter = styled.span`
  display: flex;
  align-items: center;
  justify-content: center;
  width: 10px;
  background: linear-gradient(90deg, #8fb2f0, #bcd3fa);
  font-size: 9px;
`;
const Cells = styled.div`
  display: grid;
  grid-template-columns: repeat(4, 24px);
  flex: 1;
  border-bottom: 1px solid #a8a8a8;
`;
const ScrollBar = styled.div`
  display: flex;
  flex-direction: column;
  align-items: center;
  width: 14px;
  border-left: 1px solid #dadada;
  background: #f0f0f0;
`;
const Thumb = styled.span`
  width: 12px;
  height: 58%;
  background: #c6c8ca;
`;
const palette = [
  ["Q", ["qSmart", "qLine", "qMulti", "qPoint", "qStream", "qSketch", "qCurve", "qAngle", "qMin", "qNear"]],
  ["W", ["rectB", "wShape", "wOrtho", "wPoly"]],
  ["E", ["eCircle", "eEllipse", "eArc", "eHalf", "eQuarter", "eModify", "eArcAngle", "eAxis"]],
  ["R", ["rHatch", "rCross", "rPattern", "rLinear", "rShow", "rMatch", "rChange", "rDelete"]],
  ["A", ["aText", "aSpan", "aNote", "aAlong", "aSpell", "aCase", "aQuery", "aUp", "aItalic", "aPlace", "aInc", "aInc1", "aInc2", "aField", "aRows", "aFx"]],
  ["S", ["spark", "sMany", "sCopy", "sRing", "sAsk", "sArrow", "sRow", "sTable"]],
];
const sideTools = ["arrow", "fenceS", "moveS", "brushBlue", "palette", "bulbLine", "modifyBox", "delete", "measure"];

const View = styled.section`
  display: flex;
  flex-direction: column;
  flex: 1;
  min-width: 0;
`;
const ViewTitle = styled.header`
  display: flex;
  align-items: center;
  gap: 8px;
  flex: none;
  height: 25px;
  padding: 6px 3px 0 3px;
  background: linear-gradient(#8fa9c6, #a3bedc 40%, #b5cce6);
`;
const Sys = styled.span`
  display: flex;
  align-items: center;
  justify-content: center;
  width: 10px;
  height: 10px;
  background: #e2e6ea;
  &::before { content: ""; width: 6px; height: 6px; background: #333; }
`;
const WinBtn = styled.button`
  display: flex;
  align-items: center;
  justify-content: center;
  width: 26px;
  height: 15px;
  margin-left: -5px;
  border: 1px solid ${(p) => (p.$red ? "#7d2a22" : "#6b8098")};
  border-radius: 2px;
  background: ${(p) => (p.$red ? "linear-gradient(#e39a8c, #c23a28)" : "linear-gradient(#dbe7f4, #aac2dc)")};
`;
const ViewBar = styled.div`
  display: flex;
  align-items: center;
  flex: none;
  height: 20px;
  padding-left: 2px;
  background: #f2f2f2;
`;
const Canvas = styled.div`
  position: relative;
  flex: 1;
  min-height: 0;
  overflow: hidden;
  background: #000;
`;
const Ring = styled.div`
  position: absolute;
  left: 147px;
  top: 166px;
  width: 110px;
  height: 110px;
  border: 1px solid #f4f4f4;
  border-radius: 50%;
`;
const Drawn = styled.div`
  position: absolute;
  left: 550px;
  top: 134px;
  font-family: "Liberation Sans Narrow", "Arial Narrow", "Roboto Condensed", "Liberation Sans", sans-serif;
  font-size: 160px;
  line-height: 190px;
  color: #fea6fe;
`;
const Pointer = styled.svg`
  position: absolute;
  left: 675px;
  top: 148px;
  width: 30px;
  height: 30px;
`;

/* ---------- bottom bars ---------- */

const NavBar = styled.div`
  display: flex;
  align-items: center;
  flex: none;
  height: 29px;
  background: #f1f1f1;
  border-bottom: 1px solid #dedede;
`;
const ViewNums = styled.div`
  display: flex;
  margin-left: 3px;
  margin-right: 3px;
`;
const ViewNum = styled.button`
  width: 14px;
  height: 17px;
  border-right: 1px solid #777;
  border-bottom: 1px solid #ccc;
  ${(p) => p.$on && css`background: #6fb1e0; border: 1px solid #3f6f96;`}
`;
const Coord = styled.label`
  display: flex;
  align-items: center;
  gap: 5px;
  margin-left: ${(p) => p.$ml}px;
  font-size: 12px;
  font-weight: 700;
`;
const CoordInput = styled.input`
  width: 140px;
  height: 18px;
  padding: 0 3px;
  border: 1px solid #c6c6c6;
  background: #fff;
  color: #777;
  font-size: 9px;
`;
const StatusBar = styled.footer`
  display: flex;
  align-items: center;
  flex: none;
  height: 26px;
  background: #f1f1f1;
`;
const Msg = styled.span`
  width: ${(p) => p.$w}px;
  padding-left: ${(p) => p.$pl || 0}px;
  white-space: nowrap;
`;

const tabs = ["View", "Annotate", "Attach", "Analyze", "Curves", "Constraints", "Utilities", "Drawing Aids", "Content", "Help", "PTV Print"];

export default function App() {
  return (
    <Desktop>
      <GlobalStyle />
      <TaskBar aria-label="Task bar">
        <Apps>
          {apps.map(([n, s, run, bg]) => (
            <AppButton key={n} type="button" aria-label={n} $bg={bg} $line={run === 1 ? "#7ab6e6" : run}>
              <Icon n={n} s={s} />
            </AppButton>
          ))}
        </Apps>
        <Tray>
          <Icon n="chevronWhite" s={12} />
          <Icon n="trayMail" s={12} />
          <Icon n="cloud" s={14} />
          <Icon n="wifi" s={12} />
          <span>ENG</span>
          <Clock>11:32 AM<br />3/16/2021</Clock>
          <Icon n="notice" s={14} />
        </Tray>
      </TaskBar>

      <TitleBar>
        <Icon n="mu" s={18} />
        <Gap $w={7} />
        <Picker label="Workflow" value="Drawing" $w={133} $h={19} $line="#e2e2e2" />
        <Quick>
          <IconTool n="v8" s={15} $w={16} />
          <CaretTool w={12} />
          <IconTool n="openBox" s={15} $w={19} />
          <IconTool n="save" s={13} $w={19} />
          <IconTool n="saveGear" s={13} $w={19} />
          <IconTool n="saveAlt" s={14} $w={19} />
          <IconTool n="undo" s={12} $w={18} />
          <CaretTool w={14} />
          <IconTool n="redo" s={12} $w={16} />
          <IconTool n="pin" s={13} $w={20} />
          <IconTool n="print" s={15} $w={20} />
          <IconTool n="overflow" s={8} $w={18} />
        </Quick>
        <Title>GLU-VCA-Z5A-CSR-DRG-CCS-MWL-C0005.dgn [2D - V8 DGN] - MicroStation</Title>
        <IconTool n="user" s={15} $w={18} label="Account" />
        <CaretTool w={10} />
        <IconTool n="help" s={12} $w={18} label="Help" />
        <IconTool n="minimize" s={10} $w={17} />
        <IconTool n="restore" s={10} $w={18} />
        <IconTool n="close" s={9} $w={17} />
      </TitleBar>

      <TabRow>
        <Tab type="button" $file>File</Tab>
        <Tab type="button" $on>Home</Tab>
        {tabs.map((t) => <Tab key={t} type="button">{t}</Tab>)}
        <SearchBox>
          <SearchInput placeholder="Search Ribbon (F4)" aria-label="Search Ribbon" />
          <Icon n="find" s={11} />
          <Caret />
        </SearchBox>
        <IconTool n="up" s={9} $w={18} label="Collapse ribbon" />
      </TabRow>

      <Ribbon>
        <Group name="Attributes" w={296} pl={6}>
          <Fields>
            <FieldRow>
              <Icon n="level" s={18} />
              <Picker label="Template" value="None" $w={116} />
              <Picker label="Level" value="Default" />
            </FieldRow>
            <FieldRow>
              <Picker icon="swatch" label="Color" value="0" $w={60} $pad={3} />
              <Picker icon="lineStyle" label="Line style" value="0" $w={60} $pad={3} />
              <Picker icon="weight" label="Weight" value="0" $w={51} $pad={3} />
              <Picker icon="transparency" label="Transparency" value="0" $w={52} $pad={2} />
              <Picker icon="priority" label="Priority" value="0" $pad={3} />
            </FieldRow>
          </Fields>
        </Group>
        <Group name="Primary" w={152}>
          <Big n="explorerBig" w={44} a="Explorer" />
          <Big n="attachBig" w={40} a="Attach" b="Tools" caret />
          <Column w={30} items={["cube+", "model+", "layersGreen+"]} ml={1} />
          <Column w={30} items={["layers+", "info", "grid5+"]} />
        </Group>
        <Group name="Selection" w={164}>
          <Big n="arrowBig" w={48} a="Element" b="Selection" />
          <Column w={19} items={["selDots", "selNone", ""]} />
          <Column w={19} items={["selLock", "selUnlock", "copySet"]} />
          <Big n="fence" w={42} a="Fence" b="Tools" caret />
          <Column w={30} items={["cut", "copyPale", "paste+"]} />
        </Group>
        <Group name="Placement" w={222}>
          <Big n="smartLine" w={50} a="Place" b="SmartLine" />
          <Big n="lineBig" w={34} a="Place" b="Line" />
          <Big n="arcBig" w={38} a="Arc" b="Tools" caret />
          <Column w={30} items={["circle+", "rect+", "curve+"]} ml={3} />
          <Column w={30} items={["point+", "multi+", "textA+"]} />
          <Column w={30} items={["spark+", "", ""]} />
        </Group>
        <Group name="Manipulate" w={154}>
          <Big n="move" w={34} a="Move" s={28} />
          <Big n="copyBig" w={30} a="Copy" s={28} />
          <Big n="rotate" w={36} a="Rotate" s={28} />
          <Column w={19} items={["scaleEl", "mirror", "stretch"]} />
          <Column w={30} items={["array", "align", "move2+"]} />
        </Group>
        <Group name="Modify" w={161} pl={6}>
          <Stack $w={91}>
            <TextBtn type="button"><Icon n="modify" s={14} />Modify Element</TextBtn>
            <TextBtn type="button"><Icon n="breakEl" s={14} />Break Element</TextBtn>
            <TextBtn type="button"><Icon n="trim" s={14} />Trim Multiple</TextBtn>
          </Stack>
          <Column w={30} items={["cross", "extend", "fillet+"]} />
          <Column w={30} items={["join+", "palette+", "cross2"]} />
        </Group>
        <Group name="Groups" w={93} launcher>
          <Big n="region" w={38} a="Create" b="Region" />
          <Column w={19} items={["regionS1", "regionS2", "regionS3"]} />
          <Column w={30} items={["groupA+", "hash+", "snapSet+"]} />
        </Group>
      </Ribbon>

      <BarRow>
        <Bar>
          <Handle />
          {barA.map((n) => <IconTool key={n} n={n} s={22} $w={24} $h={24} />)}
          <Handle $mr={4} />
          {barB.map((n) => <IconTool key={n} n={n} s={22} $w={24} $h={24} />)}
          <Handle $w={3} $mr={1} />
          <KeyTip>S</KeyTip>
          {barC.map((n) => (
            <React.Fragment key={n}>
              <IconTool n={n} s={22} $w={24} $h={24} />
              <CaretTool w={13} c="#111" />
            </React.Fragment>
          ))}
          {barD.map((n) => <IconTool key={n} n={n} s={22} $w={24} $h={24} />)}
          <Handle $w={3} $mr={4} />
          {barE.map((n) => <IconTool key={n} n={n} s={22} $w={24} $h={24} />)}
        </Bar>
      </BarRow>

      <Work>
        <Side>
          <SideHead>
            <span>Tasks</span>
            <Grow />
            <Caret $c="#111" />
            <Icon n="pushPin" s={9} />
            <Icon n="closeBold" s={9} />
          </SideHead>
          <TaskPick>
            <Picker icon="tasksLogo" iconSize={13} label="Task" value="Tasks" $h={20} $line="#999" $c="#111">
              <Splitter />
            </Picker>
          </TaskPick>
          <Tools>
            {sideTools.map((n, i) => (
              <IconTool key={n} n={n} s={22} $w={24} $h={24} $bg={i === 0 ? "#7da9dc" : undefined}>
                <Num>{i + 1}</Num>
              </IconTool>
            ))}
          </Tools>
          <Scroller>
            <Lists>
              <Fold type="button">
                <Icon n="wrench" s={13} />PTV Print<Grow /><Icon n="down" s={10} />
              </Fold>
              <Fold type="button" $on>
                <Icon n="qSmart" s={13} />Drawing<Grow />
                <Modes><Icon n="tiles" s={12} /><Icon n="lines" s={12} /><Icon n="bars" s={12} /></Modes>
                <Icon n="up" s={10} />
              </Fold>
              {palette.map(([k, cells]) => (
                <Section key={k}>
                  <Letter>{k}</Letter>
                  <Cells>
                    {cells.map((n) => <IconTool key={n} n={n} s={21} $w={24} $h={24} />)}
                  </Cells>
                </Section>
              ))}
            </Lists>
            <ScrollBar>
              <IconTool n="up" s={8} $w={12} $h={14} label="Scroll up" />
              <Thumb />
              <Grow />
              <IconTool n="down" s={8} $w={12} $h={16} label="Scroll down" />
            </ScrollBar>
          </Scroller>
        </Side>

        <View>
          <ViewTitle>
            <Sys />
            <span>View 1, Default</span>
            <Grow />
            <WinBtn type="button" aria-label="Minimize view"><Icon n="minimize" s={10} /></WinBtn>
            <WinBtn type="button" aria-label="Restore view"><Icon n="restore" s={11} /></WinBtn>
            <WinBtn type="button" $red aria-label="Close view"><Icon n="closeLight" s={8} /></WinBtn>
          </ViewTitle>
          <ViewBar>
            <IconTool n="viewAttr" s={18} $w={18} />
            <CaretTool w={13} c="#111" />
            <IconTool n="display" s={17} $w={18} />
            <IconTool n="sun" s={17} $w={18} />
            <CaretTool w={14} c="#111" />
            <Rule $m={2} $h={16} />
            {["brush", "zoomIn", "zoomOut", "zoomWin", "fit", "rotView", "hand"].map((n) => <IconTool key={n} n={n} s={17} />)}
            <Rule $m={3} $h={16} />
            {["viewPrev", "viewNext"].map((n) => <IconTool key={n} n={n} s={17} />)}
            <Rule $m={3} $h={16} />
            {["windows2", "clip", "clipMask"].map((n) => <IconTool key={n} n={n} s={17} />)}
          </ViewBar>
          <Canvas>
            <Ring />
            <Drawn>12345</Drawn>
            <Pointer viewBox="0 0 30 30" aria-hidden="true">
              <circle cx="14" cy="14" r="13" fill="#b7a70c" />
              <circle cx="14" cy="14" r="4" fill="none" stroke="#e8d21c" strokeWidth="1.500" />
              <path d="M14 13v14l3-3 2 5 3-1-2-5h4z" fill="#fff" stroke="#333" strokeWidth=".6" />
            </Pointer>
          </Canvas>
        </View>
      </Work>

      <NavBar>
        <Handle $w={4} />
        <IconTool n="back" s={22} $w={28} $h={24} />
        <CaretTool w={8} c="#111" />
        <IconTool n="forward" s={22} $w={29} $h={24} />
        <CaretTool w={8} />
        <IconTool n="drive" s={22} $w={28} $h={24} />
        <CaretTool w={8} c="#111" />
        <Gap $w={3} />
        <Picker icon="viewGroup" iconSize={16} label="Model" value="Default" $w={133} $h={20} $bg="#e6e6e6" $line="#c4c4c4" $c="#111" />
        <Gap $w={4} />
        <IconTool n="viewGroup" s={21} $w={24} $h={24} label="View groups" />
        <ViewNums>
          {[1, 2, 3, 4, 5, 6, 7, 8].map((v) => <ViewNum key={v} type="button" $on={v === 1}>{v}</ViewNum>)}
        </ViewNums>
        <Rule $h={24} />
        <Handle $w={5} />
        <Coord $ml={11}>X<CoordInput defaultValue="334585.6403" /></Coord>
        <Coord $ml={12}>Y<CoordInput defaultValue="5173854.9880" /></Coord>
        <Gap $w={12} />
        <Rule $h={26} />
      </NavBar>
      <StatusBar>
        <Msg $w={286} $pl={2}>Element Selection &gt; Identify element to add to set</Msg>
        <Handle $w={3} />
        <Grow />
        <Rule $h={22} />
        <IconTool n="snapLine" s={21} $w={26} $h={22} />
        <IconTool n="lock" s={13} $w={26} $h={22} />
        <Msg $w={116} $pl={4}>Default</Msg>
        <Rule $h={22} />
        <Gap $w={102} />
        <Rule $h={22} />
        <Gap $w={26} />
        <Rule $h={22} />
        <Gap $w={26} />
        <IconTool n="save" s={15} $w={27} $h={22} />
        <IconTool n="sheet" s={16} $w={27} $h={22} />
        <IconTool n="home" s={16} $w={27} $h={22} />
        <Gap $w={14} />
        <Rule $h={22} />
        <Gap $w={12} />
        <IconTool n="dbStop" s={16} $w={27} $h={22} />
        <Gap $w={13} />
        <Rule $h={22} />
        <Gap $w={12} />
        <IconTool n="trash" s={14} $w={30} $h={22} />
      </StatusBar>
    </Desktop>
  );
}
